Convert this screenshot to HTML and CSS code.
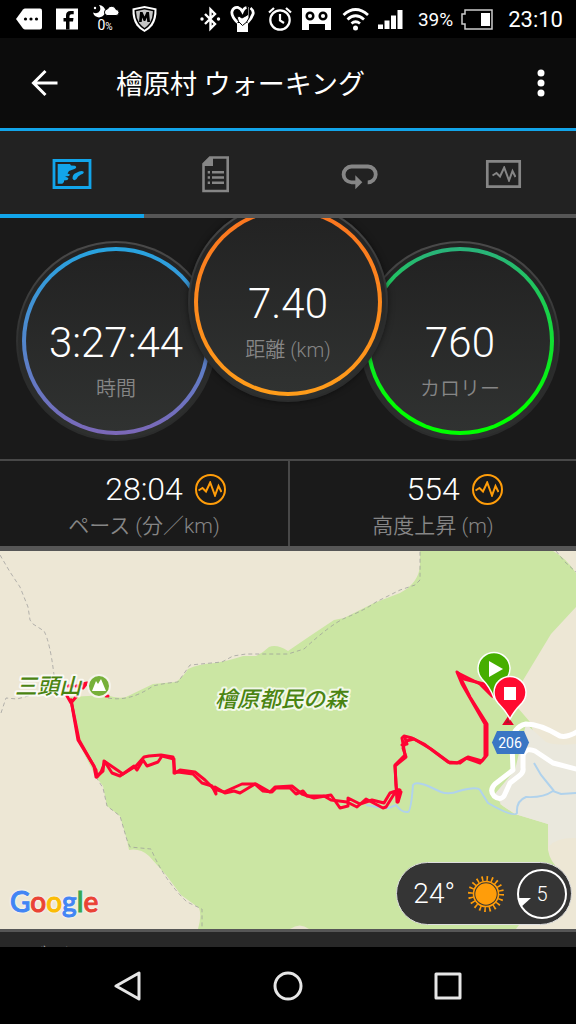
FILE: index.html
```html
<!DOCTYPE html>
<html lang="ja">
<head>
    <meta charset="UTF-8">
    <meta name="viewport" content="width=device-width, initial-scale=1.0">
    <title>檜原村 ウォーキング</title>
    <link rel="stylesheet" href="styles.css">
</head>
<body>
    <!-- Shared pulse line -->
    <svg class="defs" aria-hidden="true">
        <symbol id="pulse" viewBox="0 0 24 16">
            <path d="M.5 9.500 4.500 7 8 10.500 12.200 1.500 17 14.500 20.500 5 23.500 11" fill="none" stroke="currentColor" stroke-width="2"/>
        </symbol>
    </svg>

    <div class="status-bar">
        <div class="status-left">
            <svg width="27" height="26" viewBox="0 0 27 26" fill="#fff">
                <path d="M0 13 7 3.500Q8 2.500 9 2.500H24Q26 2.500 26 4.500V21.500Q26 23.500 24 23.500H9Q8 23.500 7 22.500z"/>
                <g fill="#000"><circle cx="9.500" cy="13" r="1.600"/><circle cx="15" cy="13" r="1.600"/><circle cx="20.500" cy="13" r="1.600"/></g>
            </svg>
            <svg width="24" height="26" viewBox="0 0 24 26">
                <path d="M1 2.500H23V23.500H1z" fill="#fff"/>
                <path d="M14.500 23.500V15.500H18L18.500 12H14.500V10Q14.500 8.300 16.500 8.300H18.700V5H15.500Q11 5 11 9.500V12H8.500V15.500H11V23.500z" fill="#000"/>
            </svg>
            <div class="rain">
                <svg width="28" height="14" viewBox="0 0 28 14" fill="#fff">
                    <path d="M8 1A6.200 6.200 0 1 1 2 8.500Q7 10.500 9 6.500 10 3.500 8 1z"/>
                    <circle cx="4" cy="4" r="1.200"/>
                    <path d="M16 11.500A3.300 3.300 0 0 1 16.500 5 4.500 4.500 0 0 1 25 5.500 3 3 0 0 1 25 11.500z" stroke="#000"/>
                </svg>
                <span>0<small>%</small></span>
            </div>
            <svg width="27" height="28" viewBox="0 0 27 28">
                <path d="M1.500 3.500 13.500 1 25.500 3.500Q26 14 21.500 20.500 18 25 13.500 27 9 25 5.500 20.500 1 14 1.500 3.500z" fill="#fff"/>
                <path d="M3.500 5 13.500 3 23.500 5Q23.500 13.500 19.800 19 17 23 13.500 24.800 10 23 7.200 19 3.500 13.500 3.500 5z" fill="#000"/>
                <path d="M5 6.300 13.500 4.500 22 6.300Q21.800 13 18.800 18 16 21.500 13.500 23 11 21.500 8.200 18 5.200 13 5 6.300z" fill="#c4c4c4"/>
                <path d="M8 17 9 7H11.500L13.500 11.500 15.500 7H18L19 17H16.300L15.800 12.500 14.300 16H12.700L11.200 12.500 10.700 17z" fill="#000"/>
            </svg>
        </div>
        <div class="status-right">
            <svg width="22" height="26" viewBox="0 0 22 26" fill="none" stroke="#fff" stroke-width="2.400">
                <path d="M5 8 15 18 10.500 22.500V3.500L15 8 5 18"/>
                <g fill="#fff" stroke="none"><circle cx="2" cy="13" r="1.700"/><circle cx="18.500" cy="13" r="1.700"/></g>
            </svg>
            <svg width="29" height="28" viewBox="0 0 29 28" fill="none" stroke="#fff" stroke-width="2.800">
                <path d="M7 27V18H18V27z" fill="#fff" stroke="none"/>
                <path d="M7.500 17.500Q1 11 2 6.500 3.500 2 8 2.500 11 3.500 12.500 6.500 14 3 16.500 2.500M20.500 3Q24 6 23 9 21.500 13.500 17.500 17.500"/>
                <path d="M7 12Q9.500 10.500 12 13L17.500 10V1.500H19V13Q17.500 17.500 12.500 20.500 7.500 17 7 12z" fill="#fff" stroke="#000" stroke-width="1"/>
            </svg>
            <svg width="27" height="28" viewBox="0 0 27 28" fill="none" stroke="#fff" stroke-width="2.200">
                <circle cx="13" cy="15" r="9.700"/>
                <path d="M13 9V15.500L17 18M2 7.500 7 3M19 3 24 7.500"/>
            </svg>
            <svg width="32" height="26" viewBox="0 0 32 26">
                <path d="M0 2H29V24H23V18H7V24H0z" fill="#fff"/>
                <g fill="#fff" stroke="#000" stroke-width="2.500"><circle cx="8" cy="10" r="3.300"/><circle cx="21" cy="10" r="3.300"/></g>
            </svg>
            <svg width="28" height="26" viewBox="0 0 28 26" fill="none" stroke="#fff" stroke-width="2.800">
                <path d="M1.500 9Q13.500-2 26 9M5.500 13.500Q13.500 6 22 13.500M9.500 17.500Q13.500 14 18 17.500"/>
                <circle cx="13.500" cy="22" r="2.500" fill="#fff" stroke="none"/>
            </svg>
            <svg width="32" height="26" viewBox="0 0 32 26" fill="#fff">
                <path d="M0 18.500H5V23H0zM6.500 14.500H11.500V23H6.500zM13 9.500H18V23H13zM19.500 4H24.500V23H19.500z"/>
            </svg>
            <span class="battery-level">39%</span>
            <svg width="39" height="26" viewBox="0 0 39 26">
                <path d="M4 4H31V23H4V18H1V8H4z" fill="none" stroke="#ccc" stroke-width="1.500"/>
                <path d="M20 7H29V20H20z" fill="#fff"/>
            </svg>
            <span class="clock">23:10</span>
        </div>
    </div>

    <header class="app-bar">
        <button class="icon-button" aria-label="戻る">
            <svg width="30" height="30" viewBox="0 0 30 30" fill="none" stroke="#fff" stroke-width="3">
                <path d="M27.500 15H4M15.500 3 3.500 15 15.500 27"/>
            </svg>
        </button>
        <h1>檜原村 ウォーキング</h1>
        <button class="icon-button menu" aria-label="メニュー">
            <svg width="30" height="30" viewBox="0 0 30 30" fill="#fff">
                <circle cx="15" cy="5" r="3.500"/><circle cx="15" cy="15" r="3.500"/><circle cx="15" cy="25" r="3.500"/>
            </svg>
        </button>
    </header>

    <nav class="tabs">
        <button class="tab active" aria-label="マップ">
            <svg width="40" height="40" viewBox="0 0 40 40" fill="currentColor">
                <path d="M2 6.500H38V33.500H2z" fill="none" stroke="currentColor" stroke-width="2.800"/>
                <path d="M5.700 10H18L19 11.500 23 11.800Q25.500 13 23 14.800L17 17 15.500 19.500 18 20.500 17 22 13 22.500 16.500 24 15.500 26 12 26.500 12 28 10.300 29.700H5.700z"/>
                <path d="M20.500 24.500Q20.500 20 24 19 29 16 31.500 17.500 32.500 19.500 29 20.500 25.500 22 24.500 25 22 27.500 20.500 24.500z"/>
            </svg>
        </button>
        <button class="tab" aria-label="統計">
            <svg width="40" height="40" viewBox="0 0 40 40" fill="none" stroke="currentColor" stroke-width="2.600">
                <path d="M14 3.500H31.700V37H7.500V10z"/>
                <path d="M7 12V9.500L14 3H17V12z" fill="currentColor" stroke="none"/>
                <path d="M11.700 18.300H14M16 18.300H28M11.700 23.500H14M16 23.500H28M11.700 28.700H14M16 28.700H28" stroke-width="2.400"/>
            </svg>
        </button>
        <button class="tab" aria-label="ラップ">
            <svg width="40" height="40" viewBox="0 0 40 40" fill="none" stroke="currentColor" stroke-width="3.800">
                <path d="M27.700 28.300A7.900 7.900 0 0 0 28 12.500H11.500A7.900 7.900 0 0 0 11.500 28.300H17"/>
                <path d="M15.300 21.300 22.300 28.300 15.300 35.300z" fill="currentColor" stroke="none"/>
            </svg>
        </button>
        <button class="tab" aria-label="グラフ">
            <svg width="40" height="40" viewBox="0 0 40 40">
                <path d="M3.300 7.300H35.700V32.700H3.300z" fill="none" stroke="currentColor" stroke-width="2.700"/>
                <use href="#pulse" x="8" y="12" width="24" height="16"/>
            </svg>
        </button>
    </nav>

    <section class="rings">
        <div class="ring ring-time">
            <div class="ring-face">
                <span class="ring-value">3:27:44</span>
                <span class="ring-label">時間</span>
            </div>
        </div>
        <div class="ring ring-distance">
            <div class="ring-face">
                <span class="ring-value">7.40</span>
                <span class="ring-label">距離 (km)</span>
            </div>
        </div>
        <div class="ring ring-calories">
            <div class="ring-face">
                <span class="ring-value">760</span>
                <span class="ring-label">カロリー</span>
            </div>
        </div>
    </section>

    <section class="stats">
        <div class="stat">
            <div class="stat-row">
                <span class="stat-value">28:04</span>
                <button class="chart-button" aria-label="ペースのグラフ"><svg width="24" height="16"><use href="#pulse"/></svg></button>
            </div>
            <div class="stat-label">ペース (分／km)</div>
        </div>
        <div class="stat">
            <div class="stat-row">
                <span class="stat-value">554</span>
                <button class="chart-button" aria-label="高度のグラフ"><svg width="24" height="16"><use href="#pulse"/></svg></button>
            </div>
            <div class="stat-label">高度上昇 (m)</div>
        </div>
    </section>

    <section class="map">
        <svg class="map-canvas" viewBox="0 551 576 378" preserveAspectRatio="xMidYMid slice">
            <!-- Forest -->
            <path fill="#cbe6a3" d="M70 697 106 695Q118 699 126 697L153 684 176 682Q184 676 188 669 198 664 215 663 228 661 243 656L256 656Q264 652 269 647 277 644 288 651L310 636 334 620 344 618 374 603 400 593Q419 583 420 565V551H553Q566 558 576 573V607L551 634 522 682 518 708 530 722 536 740 500 804 515 814 548 824V850Q550 862 560 870L516 929H198Q202 915 199 908L181 895 166 875 149 856Q140 848 129 850L127 840 120 816 107 806 103 786 96 777 77 740z"/>
            <!-- Built-up area -->
            <path fill="#eae8dd" d="M526 724 546 742Q556 746 576 744V838Q558 837 549 846L548 824 515 814 503 806 494 795 515 770z"/>
            <path fill="#eae6d2" d="M290 929Q300 922 309 929z"/>

            <g class="trail">
                <path d="M0 555 10 572 20 587 28 607 30 620 33 624 44 631Q50 642 54 675"/>
                <path d="M1 713 6 698 17 699 32 695"/>
                <path d="M108 698Q130 702 153 686 165 683 178 682L190 665 222 662 233 656 246 654 288 654 304 649Q330 625 345 618 365 610 376 602L400 590 415 585 420 580V551"/>
                <path d="M556 551 565 562 576 572"/>
                <path d="M96 777 103 788 107 806 120 816 127 840 130 847 151 849Q164 880 187 902L202 909V929"/>
            </g>

            <g class="river">
                <path d="M366 805Q380 808 389 808L396 805Q402 813 408 812 411 811 413 785 416 781 428 786L441 792Q449 795 459 791 477 786 480 790L488 803Q514 818 517 813 516 801 526 797 543 798 553 791L561 794 576 793"/>
                <path d="M534 763 541 775 554 791"/>
            </g>

            <path class="road" d="M580 730Q568 738 560 736 540 724 526 724 512 727 512 745L513 770 495 784Q489 790 494 796 500 801 504 796L510 783 519 776Q524 772 523 768L523 755Q526 747 535 751L553 763 580 770"/>

            <!-- Recorded track, out and back -->
            <g class="track">
                <path d="M67 696 71 703 76 697M71 700 78 740 94 766 96 777 103 771 104 761 123 774 136 766 144 757 149 756 161 755 173 757 175 773 180 770 195 772 205 780 214 789 224 792 242 784 256 784 270 792 275 787 292 786 302 794 314 798 331 795 340 808 348 806 348 798 360 804 372 800 384 803 390 793 399 790 397 802 395 765 405 755 402 738 404 736 412 738 424 744 448 762 460 763 468 757 482 761 487 755 487 724 470 697 458 673 480 684 492 696"/>
                <path d="M71 700 79 740 96 770 97 777 101 772 105 762 112 773 120 776 134 766 137 770 143 760 147 766 158 762 162 756 174 759 174 773 178 772 193 774 202 783 212 786 216 794 215 787 225 793 234 791 240 793 255 784 263 791 272 792 276 788 290 788 296 794 303 791 307 796 324 796 331 800 347 802 357 807 366 799 383 808 386 807 396 791 401 792 398 802 396 785 395 766 406 757 403 748 406 741 414 739 431 749 450 763 457 763 466 758 480 763 485 757 485 724 462 684 457 672 464 679 484 684 494 697"/>
                <path d="M397 790 400 790 398 801M402 745 407 744 405 738"/>
                <path d="M68 686H73M76 686H79M82 684 87 683M86 684 83 688M106 696H108" />
            </g>

            <path d="M508 718 504 724H512z" fill="#a01c2c" stroke="#e8002a" stroke-width="2"/>

            <!-- Mountain -->
            <circle cx="99" cy="686" r="11" fill="#76b03a" stroke="#f5f3ea" stroke-width="2"/>
            <path d="M92 691 96 681 98 684 101 679 106 691z" fill="#fff"/>
            <text class="place" x="15" y="694">三頭山</text>
            <text class="place" x="215" y="707">檜原都民の森</text>

            <!-- Road number -->
            <path d="M497 731H524L529 742.500 524 754H497L492 742.500z" fill="#3a76c4"/>
            <text class="route-number" x="510" y="748">206</text>

            <!-- Start and finish -->
            <g stroke="#fff" stroke-width="1.500">
                <path d="M494 698Q490 687 482 679A16 16 0 1 1 506 679Q498 687 494 698z" fill="#46ae00"/>
                <path d="M510 719Q506 711 498 703A16 16 0 1 1 522 703Q514 711 510 719z" fill="#ff0a30"/>
            </g>
            <path d="M489 661 503 669 489 677z" fill="#fff"/>
            <path d="M504 687H516V700H504z" fill="#fff"/>
        </svg>

        <div class="google" aria-label="Google"><span class="g-blue">G</span><span class="g-red">o</span><span class="g-yellow">o</span><span class="g-blue">g</span><span class="g-green">l</span><span class="g-red">e</span></div>

        <div class="weather">
            <span class="temperature">24°</span>
            <svg width="38" height="38" viewBox="-19 -19 38 38">
                <circle r="15.500" fill="none" stroke="#ff9d0a" stroke-width="5" stroke-dasharray="1.600 3.269"/>
                <circle r="12.500" fill="#353535" stroke="#ff9d0a" stroke-width="1.600"/>
                <circle r="10.700" fill="#ff9d0a"/>
            </svg>
            <div class="wind">
                <svg width="50" height="50" viewBox="0 0 50 50">
                    <circle cx="25" cy="25" r="24" fill="none" stroke="#fff" stroke-width="2"/>
                    <path d="M1 29H14L4 38z" fill="#fff"/>
                </svg>
                <span>5</span>
            </div>
        </div>
    </section>

    <section class="device">
        <div class="device-title">デバイス</div>
    </section>

    <footer class="nav-bar">
        <button aria-label="戻る">
            <svg width="30" height="30" viewBox="0 0 30 30"><path d="M26 2V28L3 15z"/></svg>
        </button>
        <button aria-label="ホーム">
            <svg width="30" height="30" viewBox="0 0 30 30"><circle cx="15" cy="15" r="13"/></svg>
        </button>
        <button aria-label="履歴">
            <svg width="30" height="30" viewBox="0 0 30 30"><path d="M3 3H27V27H3z"/></svg>
        </button>
    </footer>
</body>
</html>
```

FILE: styles.css
```css
* {
    box-sizing: border-box;
}
body {
    margin: 0;
    height: 100vh;
    display: flex;
    flex-direction: column;
    background: #000;
    color: #fff;
    font-family: Roboto, "Noto Sans CJK JP", sans-serif;
    overflow: hidden;
}
button {
    background: none;
    border: 0;
    padding: 0;
    color: inherit;
    cursor: pointer;
}
svg {
    display: block;
    flex: none;
}
.defs {
    position: absolute;
    width: 0;
    height: 0;
}

/* Status bar */
.status-bar {
    flex: none;
    height: 38px;
    padding: 0 13px 0 16px;
    display: flex;
    justify-content: space-between;
    align-items: center;
}
.status-left,
.status-right {
    display: flex;
    align-items: center;
}
.status-left {
    gap: 12px;
}
.status-right {
    gap: 8px;
}
.rain {
    text-align: center;
    font-size: 14px;
    line-height: 14px;
}
.rain small {
    font-size: 10px;
}
.battery-level {
    font-size: 19px;
}
.clock {
    font-size: 22px;
}

/* Title bar */
.app-bar {
    flex: none;
    height: 93px;
    padding: 0 20px 0 30px;
    display: flex;
    align-items: center;
    background: #0c0c0c;
    border-bottom: 3px solid #12a5ea;
}
.app-bar h1 {
    flex: 1;
    margin: 0 0 0 56px;
    padding-top: 4px;
    font-size: 27px;
    font-weight: 400;
    line-height: 40px;
}

/* Tabs */
.tabs {
    flex: none;
    display: grid;
    grid-template-columns: repeat(4, 1fr);
    height: 87px;
    background: #222;
    position: relative;
    z-index: 1;
}
.tab {
    display: flex;
    justify-content: center;
    align-items: center;
    padding-top: 3px;
    color: #868686;
    border-bottom: 4px solid #565656;
}
.tab.active {
    color: #12a5ea;
    border-bottom-color: #12a5ea;
}

/* Summary rings */
.rings {
    flex: none;
    display: flex;
    justify-content: center;
    padding: 23px 0 18px;
    background: #1a1a1a;
    overflow: hidden;
}
.ring {
    flex: none;
    width: 200px;
    height: 200px;
    padding: 4px;
    border: 2px solid transparent;
    border-radius: 50%;
    background: linear-gradient(#222, #2e302f) padding-box, linear-gradient(#4a4a4a, #2b2c2c 60%) border-box;
}
.ring-face {
    height: 100%;
    padding-top: 72px;
    border: 4px solid transparent;
    border-radius: 50%;
    display: flex;
    flex-direction: column;
    align-items: center;
}
.ring-time .ring-face {
    background: linear-gradient(#222, #303231) padding-box, linear-gradient(#27a4e0, #7c68b8) border-box;
}
.ring-distance {
    margin: -39px -28px 0;
    position: relative;
    box-shadow: 0 0 6px rgba(0, 0, 0, 0.5);
}
.ring-distance .ring-face {
    background: linear-gradient(#222, #303231) padding-box, linear-gradient(#fa7420, #ff9d1a) border-box;
}
.ring-calories .ring-face {
    background: linear-gradient(#222, #303231) padding-box, linear-gradient(#2ab27c, #0f0 85%) border-box;
}
.ring-value {
    font-size: 42px;
    font-weight: 300;
    line-height: 40px;
}
.ring-label {
    margin-top: 11px;
    font-size: 20px;
    font-weight: 350;
    line-height: 30px;
    color: #868686;
}

/* Pace and elevation */
.stats {
    flex: none;
    display: grid;
    grid-template-columns: 1fr 1fr;
    background: #1a1a1a;
    border-top: 2px solid #484848;
    border-bottom: 5px solid #565656;
}
.stat {
    height: 85px;
    padding-top: 10px;
}
.stat + .stat {
    border-left: 2px solid #484848;
}
.stat-row {
    display: grid;
    grid-template-columns: 1fr auto 1fr;
    column-gap: 12px;
    align-items: center;
}
.stat-value {
    grid-column: 2;
    font-size: 32px;
    font-weight: 300;
    line-height: 36px;
}
.chart-button {
    display: flex;
    justify-content: center;
    align-items: center;
    width: 31px;
    height: 31px;
    border: 2px solid #ff9d0a;
    border-radius: 50%;
    color: #ff9d0a;
}
.stat-label {
    text-align: center;
    font-size: 21px;
    font-weight: 350;
    line-height: 38px;
    color: #868686;
}

/* Map */
.map {
    flex: 1;
    min-height: 0;
    position: relative;
    background: #ede7d5;
    overflow: hidden;
}
.map-canvas {
    width: 100%;
    height: 100%;
}
.trail path {
    fill: none;
    stroke: #999;
    stroke-opacity: 0.7;
    stroke-dasharray: 4 3;
}
.river path {
    fill: none;
    stroke: #b0d2ec;
    stroke-width: 2;
}
.road {
    fill: none;
    stroke: #fff;
    stroke-width: 5;
    stroke-linejoin: round;
}
.track path {
    fill: none;
    stroke: #ff0433;
    stroke-width: 3;
    stroke-linejoin: round;
    stroke-linecap: round;
}
.place {
    font-size: 22px;
    font-style: italic;
    font-weight: 500;
    fill: #4a8412;
    stroke: rgba(255, 255, 255, 0.75);
    stroke-width: 4;
    stroke-linejoin: round;
    paint-order: stroke;
}
.route-number {
    font-size: 14px;
    fill: #fff;
    text-anchor: middle;
}
.google {
    position: absolute;
    left: 10px;
    bottom: 10px;
    font-family: Lato, sans-serif;
    font-size: 28px;
    font-weight: 500;
    line-height: 36px;
    -webkit-text-stroke: 1px;
    text-shadow: 0 0 3px #fff, 0 0 3px #fff;
}
.g-blue {
    color: #4285f4;
}
.g-red {
    color: #ea4335;
}
.g-yellow {
    color: #fbbc05;
}
.g-green {
    color: #34a853;
}

/* Weather badge */
.weather {
    position: absolute;
    right: 4px;
    bottom: 4px;
    height: 63px;
    padding: 0 4px 0 16px;
    display: flex;
    align-items: center;
    gap: 12px;
    background: #353535;
    border: 1px solid #ddd;
    border-radius: 32px;
}
.temperature {
    font-size: 28px;
    font-weight: 300;
}
.wind {
    position: relative;
}
.wind span {
    position: absolute;
    inset: 0;
    text-align: center;
    font-size: 20px;
    font-weight: 300;
    line-height: 50px;
}

/* Top of the next section */
.device {
    flex: none;
    height: 18px;
    padding: 9px 24px 0;
    background: #282828;
    border-top: 3px solid #565656;
    overflow: hidden;
}
.device-title {
    font-size: 23px;
    font-weight: 300;
    line-height: 34px;
    color: #aaa;
}

/* Navigation bar */
.nav-bar {
    flex: none;
    display: grid;
    grid-template-columns: repeat(3, 1fr);
    height: 77px;
    padding: 0 48px;
}
.nav-bar button {
    display: flex;
    justify-content: center;
    align-items: center;
}
.nav-bar svg {
    fill: none;
    stroke: #e6e6e6;
    stroke-width: 3;
    stroke-linejoin: round;
}
```
